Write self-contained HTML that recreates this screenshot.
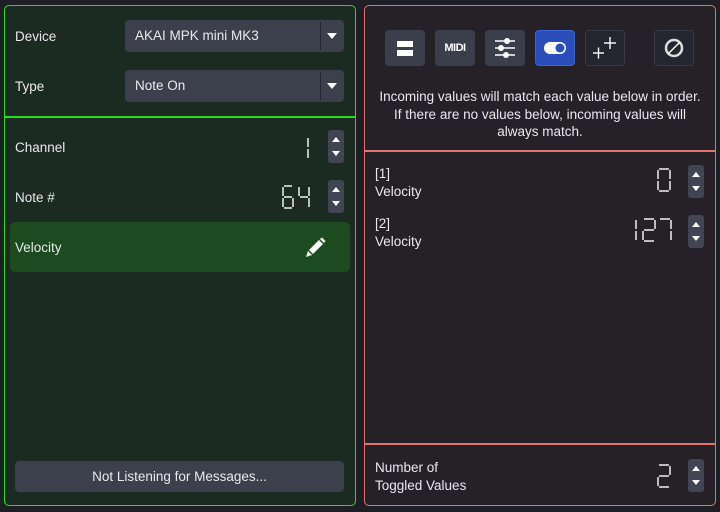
<!DOCTYPE html>
<html><head><style>
*{box-sizing:border-box;margin:0;padding:0}
body{width:720px;height:512px;background:#1e1f25;font-family:"Liberation Sans","DejaVu Sans",sans-serif;font-size:13.5px;color:#e8e8ee;position:relative;overflow:hidden}
.a{position:absolute}
.lp{left:4px;top:5px;width:352px;height:501px;border:1.5px solid #1ee01e;border-radius:5px;background:#1c2b22}
.rp{left:364px;top:5px;width:352px;height:501px;border:1.5px solid #e4736f;border-radius:5px;background:#252127}
.dd{background:#3c3f4c;border-radius:4px;height:32px;width:219px;left:125px;padding:8px 10px}
.dd .sep{position:absolute;left:195px;top:2px;width:1px;height:28px;background:#24252e}
.dd .ar{position:absolute;left:202px;top:13px;width:0;height:0;border-left:5px solid transparent;border-right:5px solid transparent;border-top:6px solid #fff}
.sp{width:16px;height:33px;background:#414453;border-radius:3px}
.sp:before{content:"";position:absolute;left:4px;top:7px;border-left:4px solid transparent;border-right:4px solid transparent;border-bottom:5px solid #fff}
.sp:after{content:"";position:absolute;left:4px;top:21px;border-left:4px solid transparent;border-right:4px solid transparent;border-top:5px solid #fff}
.ib{top:30px;width:40px;height:36px;border-radius:4px;background:#3b3e4b}
svg line{stroke:#fff;stroke-width:1.4}
</style></head><body>
<div class="a lp"></div>
<div class="a rp"></div>
<div class="a" style="left:15px;top:29px">Device</div>
<div class="a dd" style="top:20px">AKAI MPK mini MK3<div class="sep"></div><div class="ar"></div></div>
<div class="a" style="left:15px;top:79px">Type</div>
<div class="a dd" style="top:70px">Note On<div class="sep"></div><div class="ar"></div></div>
<div class="a" style="left:5px;top:116px;width:350px;height:1.5px;background:#1ee01e"></div>
<div class="a" style="left:15px;top:140px">Channel</div>
<div class="a sp" style="left:328px;top:130px"></div>
<div class="a" style="left:15px;top:190px">Note #</div>
<div class="a sp" style="left:328px;top:180px"></div>
<div class="a" style="left:10px;top:222px;width:340px;height:50px;background:#1b4b1f;border-radius:5px"></div>
<div class="a" style="left:15px;top:240px">Velocity</div>
<svg class="a" style="left:303px;top:236px" width="24" height="24" viewBox="0 0 24 24"><path d="M3 21 L5 15 L9 19 Z M6 14 L16 4 L20 8 L10 18 Z M17 3 L19 1.5 L22.5 5 L21 7 Z" fill="#fff"/></svg>
<div class="a" style="left:15px;top:461px;width:329px;height:31px;background:#3c3f4c;border-radius:4px;text-align:center;line-height:31px">Not Listening for Messages...</div>

<svg class="a" style="left:0;top:0" width="720" height="512">
<g transform="translate(298,137)"><line x1="10" y1="1" x2="10" y2="10"/><line x1="10" y1="12" x2="10" y2="21"/></g>
<g transform="translate(283,186)"><line x1="1" y1="0" x2="9" y2="0"/><line x1="0" y1="1" x2="0" y2="10"/><line x1="1" y1="11" x2="9" y2="11"/><line x1="0" y1="12" x2="0" y2="21"/><line x1="10" y1="12" x2="10" y2="21"/><line x1="1" y1="22" x2="9" y2="22"/></g>
<g transform="translate(299,186)"><line x1="0" y1="1" x2="0" y2="10"/><line x1="1" y1="11" x2="9" y2="11"/><line x1="10" y1="1" x2="10" y2="10"/><line x1="10" y1="12" x2="10" y2="21"/></g>
<g transform="translate(658,169)"><line x1="1" y1="0" x2="11" y2="0"/><line x1="0" y1="1" x2="0" y2="10"/><line x1="12" y1="1" x2="12" y2="10"/><line x1="0" y1="12" x2="0" y2="21"/><line x1="12" y1="12" x2="12" y2="21"/><line x1="1" y1="22" x2="11" y2="22"/></g>
<g transform="translate(626,219)"><line x1="10" y1="1" x2="10" y2="10"/><line x1="10" y1="12" x2="10" y2="21"/></g>
<g transform="translate(643,219)"><line x1="1" y1="0" x2="11" y2="0"/><line x1="12" y1="1" x2="12" y2="10"/><line x1="1" y1="11" x2="11" y2="11"/><line x1="0" y1="12" x2="0" y2="21"/><line x1="1" y1="22" x2="11" y2="22"/></g>
<g transform="translate(659,219)"><line x1="1" y1="0" x2="11" y2="0"/><line x1="12" y1="1" x2="12" y2="10"/><line x1="12" y1="12" x2="12" y2="21"/></g>
<g transform="translate(658,465)"><line x1="1" y1="0" x2="11" y2="0"/><line x1="12" y1="1" x2="12" y2="10"/><line x1="1" y1="11" x2="11" y2="11"/><line x1="0" y1="12" x2="0" y2="21"/><line x1="1" y1="22" x2="11" y2="22"/></g>
</svg>

<div class="a ib" style="left:385px"><div class="a" style="left:12px;top:11px;width:16px;height:6px;background:#fff"></div><div class="a" style="left:12px;top:20px;width:16px;height:6px;background:#fff"></div></div>
<div class="a ib" style="left:435px;color:#fff;font-weight:bold;font-size:11px;text-align:center;line-height:36px;letter-spacing:-0.5px">MIDI</div>
<div class="a ib" style="left:485px"><svg width="40" height="36"><g stroke="#fff" stroke-width="2.5"><line x1="10" y1="11" x2="30" y2="11"/><line x1="10" y1="18" x2="30" y2="18"/><line x1="10" y1="25" x2="30" y2="25"/></g><circle cx="22" cy="11" r="3" fill="#fff"/><circle cx="16" cy="18" r="3" fill="#fff"/><circle cx="21" cy="25" r="3" fill="#fff"/></svg></div>
<div class="a ib" style="left:535px;background:#2a4fbb;border:1px solid #3a63d4"><svg width="40" height="36" style="margin:-1px"><rect x="9" y="12" width="22" height="12" rx="6" fill="#fff"/><circle cx="25" cy="18" r="4.5" fill="#2a4fbb"/></svg></div>
<div class="a ib" style="left:585px;background:#24252e;border:1px solid #383a46"><svg width="40" height="36" style="margin:-1px"><g stroke="#ddd" stroke-width="3.2"><line x1="8" y1="23" x2="19" y2="23"/><line x1="13.5" y1="17.5" x2="13.5" y2="28.5"/><line x1="19" y1="13" x2="31" y2="13"/><line x1="25" y1="7" x2="25" y2="19"/></g></svg></div>
<div class="a ib" style="left:654px;background:#24252e;border:1px solid #383a46"><svg width="40" height="36" style="margin:-1px"><circle cx="20" cy="18" r="8" fill="none" stroke="#ddd" stroke-width="2.5"/><line x1="14.5" y1="23.5" x2="25.5" y2="12.5" stroke="#ddd" stroke-width="2.5"/></svg></div>
<div class="a" style="left:366px;top:88px;width:348px;text-align:center;line-height:17.5px">Incoming values will match each value below in order.<br>If there are no values below, incoming values will<br>always match.</div>
<div class="a" style="left:365px;top:150px;width:350px;height:1.5px;background:#e4736f"></div>
<div class="a" style="left:375px;top:165px;line-height:18px">[1]<br>Velocity</div>
<div class="a sp" style="left:688px;top:165px"></div>
<div class="a" style="left:375px;top:215px;line-height:18px">[2]<br>Velocity</div>
<div class="a sp" style="left:688px;top:215px"></div>
<div class="a" style="left:365px;top:443px;width:350px;height:1.5px;background:#e4736f"></div>
<div class="a" style="left:375px;top:459px;line-height:18px">Number of<br>Toggled Values</div>
<div class="a sp" style="left:688px;top:459px"></div>
</body></html>
